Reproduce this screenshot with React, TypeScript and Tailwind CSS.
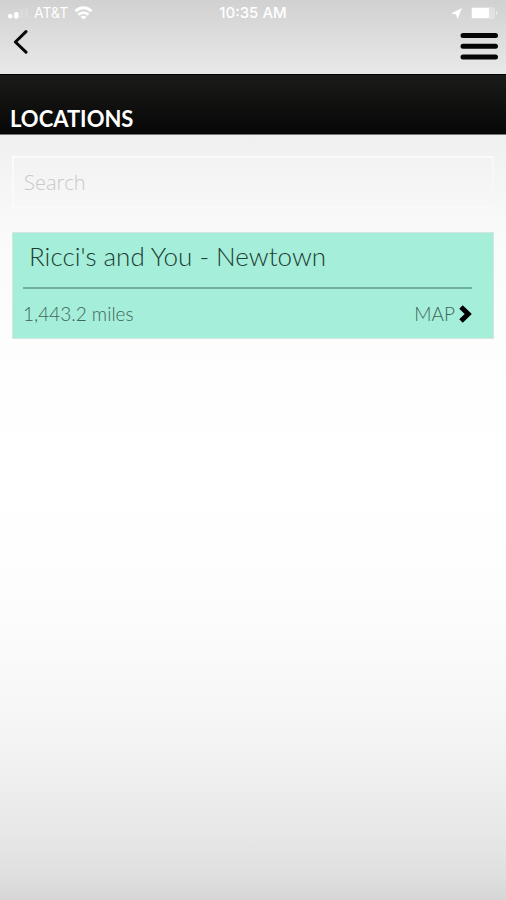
import { useState } from 'react';

const locations = [
  { id: 1, name: "Ricci's and You - Newtown", distance: '1,443.2 miles' },
];

function StatusBar() {
  return (
    <div className="grid grid-cols-3 items-center h-[26px] px-2 text-white font-['Inter',sans-serif] leading-4">
      <div className="flex items-center gap-[6px]">
        <svg className="w-[20px] h-[12px]" viewBox="0 0 20 12" fill="currentColor">
          <rect x="0" y="7" width="4.5" height="4.5" rx="2" />
          <rect x="6" y="5" width="4.5" height="6.5" rx="1.5" />
          <rect x="12" y="2" width="3" height="9" rx="1" opacity="0.12" />
          <rect x="17" y="0" width="3" height="11" rx="1" opacity="0.12" />
        </svg>
        <span className="text-sm leading-4">AT&amp;T</span>
        <svg className="w-[19px] h-[14px]" viewBox="0 0 18 14" fill="none" stroke="currentColor" strokeWidth="2.8">
          <path d="M1 5.2C5.5 0.6 12.5 0.6 17 5.2" />
          <path d="M4 8.8C6.8 6 11.2 6 14 8.8" />
          <path d="M9 13.6L6 10.8C7.8 9.4 10.2 9.4 12 10.8Z" fill="currentColor" stroke="none" />
        </svg>
      </div>
      <span className="text-center text-[15px] leading-4 font-medium">10:35 AM</span>
      <div className="flex items-center justify-end gap-[9px]">
        <svg className="w-[11px] h-[11px]" viewBox="0 0 11 11" fill="currentColor">
          <path d="M11 0L6.6 11L5 6.4L0 5.4Z" />
        </svg>
        <svg className="w-[27px] h-[12px]" viewBox="0 0 27 12" fill="currentColor">
          <rect x="0" y="0" width="24" height="12" rx="3" opacity="0.3" />
          <rect x="1" y="1" width="17" height="10" rx="1" />
          <path d="M25 4C27 4.6 27 7.4 25 8Z" opacity="0.5" />
        </svg>
      </div>
    </div>
  );
}

export default function App() {
  const [search, setSearch] = useState('');

  const results = locations.filter((l) =>
    l.name.toLowerCase().includes(search.toLowerCase())
  );

  return (
    <div className="min-h-screen font-['Lato',sans-serif] bg-[linear-gradient(to_bottom,#d1d1d1_0%,#e8e8e8_8%,#f1f1f1_16%,#fafafa_26%,#fefefe_42%,#ffffff_54%,#fdfdfd_66%,#f8f8f8_77%,#f2f2f2_84%,#e8e8e8_92%,#e0e0e0_97%,#d6d6d6_100%)]">
      {/* Header */}
      <header>
        <StatusBar />
        <div className="flex items-start justify-between h-12 pl-[13px] pr-2">
          <button type="button" aria-label="Back" className="pt-1">
            <svg className="w-[15px] h-[24px]" viewBox="0 0 15 24" fill="none" stroke="#080808" strokeWidth="3" strokeLinecap="round" strokeLinejoin="round">
              <path d="M13 1.6L2.4 12L13 22.2" />
            </svg>
          </button>
          <button type="button" aria-label="Menu" className="pt-[6px]">
            <svg className="w-[38px] h-[28px]" viewBox="0 0 38 28" stroke="#050505" strokeWidth="5" strokeLinecap="round">
              <path d="M3 3.5H35.5M3 14.3H35.5M3 25H35.5" />
            </svg>
          </button>
        </div>
      </header>

      {/* Title bar */}
      <div className="flex items-end h-[61px] px-[10px] pb-[3px] bg-linear-to-b from-[#1b1b19] to-[#070707] border-t border-b border-t-black border-b-[#777777]">
        <h1 className="text-[22px] leading-6 font-bold text-white">LOCATIONS</h1>
      </div>

      <main className="pt-[21px] px-3">
        {/* Search */}
        <input
          type="text"
          aria-label="Search"
          placeholder="Search"
          value={search}
          onChange={(e) => setSearch(e.target.value)}
          className="block w-full h-[52px] px-[10px] border-2 border-t-[#fafafa] border-l-[#fafafa] border-r-[#f7f7f7] border-b-[#fafafa] bg-transparent font-['Open_Sans',sans-serif] text-[20px] font-light text-gray-700 placeholder:text-[#c9c9c9] focus:outline-none"
        />

        {/* Results */}
        <ul className="mt-6 space-y-3">
          {results.map((location) => (
            <li key={location.id} className="h-[107px] pl-[10px] pr-[21px] bg-[#a5eed9] border border-[#d3e6df]">
              <h2 className="h-[56px] pl-[6px] pt-[7px] border-b-2 border-[#72ae9d] text-[26px] leading-8 font-light text-[#1f3d34]">
                {location.name}
              </h2>
              <div className="flex items-center justify-between h-[49px] text-[19px] leading-6 font-light text-[#3f665a]">
                <span>{location.distance}</span>
                <a href="#map" className="flex items-center gap-1">
                  MAP
                  <svg className="w-[13px] h-[18px]" viewBox="0 0 13 18" fill="none" stroke="#000000" strokeWidth="5">
                    <path d="M2 2L9.2 9L2 16" />
                  </svg>
                </a>
              </div>
            </li>
          ))}
        </ul>
      </main>
    </div>
  );
}
